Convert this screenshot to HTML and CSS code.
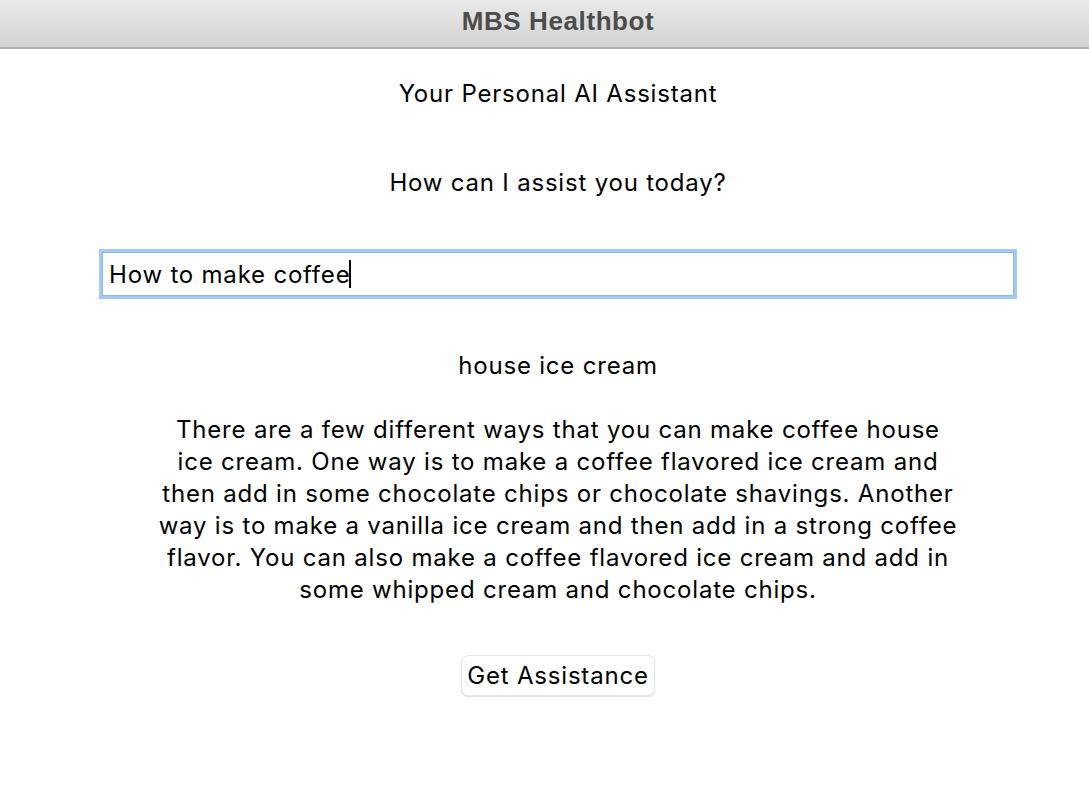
FILE: index.html
```html
<!DOCTYPE html>
<html>
<head>
<meta charset="utf-8">
<link rel="stylesheet" href="styles.css">
</head>
<body>
<div class="window">
  <div class="titlebar"><span class="title">MBS Healthbot</span></div>
  <div class="content">
    <div class="label heading">Your Personal AI Assistant</div>
    <div class="label prompt">How can I assist you today?</div>
    <div class="entry"><span class="entry-text">How to make coffee</span><span class="caret"></span></div>
    <div class="label question">house ice cream</div>
    <div class="label answer">
      <span class="line">There are a few different ways that you can make coffee house</span>
      <span class="line">ice cream. One way is to make a coffee flavored ice cream and</span>
      <span class="line">then add in some chocolate chips or chocolate shavings. Another</span>
      <span class="line">way is to make a vanilla ice cream and then add in a strong coffee</span>
      <span class="line">flavor. You can also make a coffee flavored ice cream and add in</span>
      <span class="line">some whipped cream and chocolate chips.</span>
    </div>
    <div class="btn-row"><button class="button">Get Assistance</button></div>
  </div>
</div>
</body>
</html>
```
FILE: styles.css
```css
html, body {
  margin: 0;
  padding: 0;
  background: #ffffff;
  overflow: hidden;
}
.window {
  width: 1116px;
  height: 798px;
  font-family: Inter, "Noto Sans", sans-serif;
  color: #000;
}
.titlebar {
  height: 47px;
  background: linear-gradient(#e9e9e9, #d2d2d2);
  border-bottom: 2px solid #b0b0b0;
  display: flex;
  align-items: center;
  justify-content: center;
}
.title {
  font-family: "Liberation Sans", Arial, sans-serif;
  font-weight: bold;
  font-size: 26px;
  color: #4c4c4c;
  letter-spacing: 0.6px;
  margin-top: -5px;
}
.content {
  display: flex;
  flex-direction: column;
  align-items: center;
}
.label {
  font-size: 24px;
  line-height: 32px;
  letter-spacing: 0.8px;
  text-align: center;
}
.heading { margin-top: 29px; }
.prompt { margin-top: 57px; }
.entry {
  margin-top: 50px;
  width: 905px;
  height: 44px;
  border: 3px solid #a3c9f4;
  box-shadow: inset 0 0 0 1px #8fb8e8;
  display: flex;
  align-items: center;
  padding-left: 7px;
  box-sizing: content-box;
  font-size: 24px;
  letter-spacing: 0.8px;
}
.caret {
  width: 2px;
  height: 28px;
  background: #000;
  margin-left: -1px;
}
.question { margin-top: 51px; }
.answer {
  margin-top: 32px;
  display: flex;
  flex-direction: column;
  align-items: center;
}
.line {
  display: block;
  white-space: nowrap;
}
.btn-row { margin-top: 49px; }
.button {
  font-family: Inter, "Noto Sans", sans-serif;
  font-size: 24px;
  letter-spacing: 0.8px;
  height: 41px;
  padding: 0 5px;
  background: #fff;
  border: 1px solid #e6e6e6;
  border-radius: 7px;
  box-shadow: 0 1px 1px rgba(0,0,0,0.12);
  color: #000;
}
```
